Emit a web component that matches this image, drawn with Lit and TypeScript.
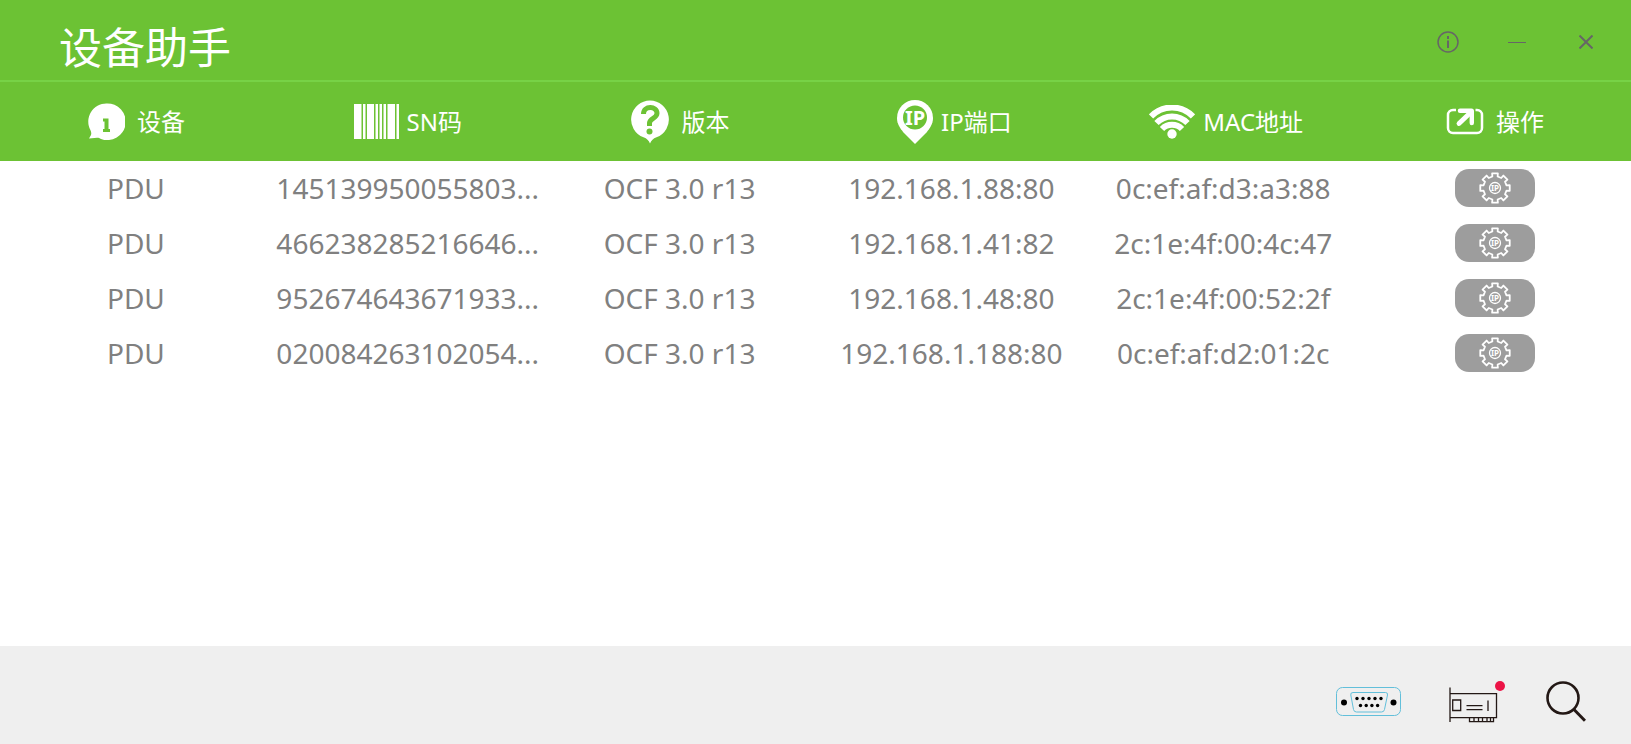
import { LitElement, html, css, svg } from "lit";
import { customElement, property, state } from "lit/decorators.js";

interface Device {
  name: string;
  sn: string;
  version: string;
  address: string;
  mac: string;
}

const DEVICES: Device[] = [
  { name: "PDU", sn: "145139950055803...", version: "OCF 3.0 r13", address: "192.168.1.88:80", mac: "0c:ef:af:d3:a3:88" },
  { name: "PDU", sn: "466238285216646...", version: "OCF 3.0 r13", address: "192.168.1.41:82", mac: "2c:1e:4f:00:4c:47" },
  { name: "PDU", sn: "952674643671933...", version: "OCF 3.0 r13", address: "192.168.1.48:80", mac: "2c:1e:4f:00:52:2f" },
  { name: "PDU", sn: "020084263102054...", version: "OCF 3.0 r13", address: "192.168.1.188:80", mac: "0c:ef:af:d2:01:2c" },
];

/* Outline of an eight-toothed gear centred on the origin. */
function gearPath(outer: number, inner: number): string {
  const points: string[] = [];
  const at = (r: number, deg: number) => {
    const a = (deg * Math.PI) / 180;
    points.push(`${(r * Math.cos(a)).toFixed(2)} ${(r * Math.sin(a)).toFixed(2)}`);
  };
  for (let i = 0; i < 8; i++) {
    const c = i * 45;
    at(inner, c - 13);
    at(outer, c - 11);
    at(outer, c + 11);
    at(inner, c + 13);
  }
  return `M${points.join("L")}Z`;
}

const GEAR = gearPath(15, 11.8);

const deviceIcon = html`<svg width="38" height="38" viewBox="0 0 38 38" aria-hidden="true">
  <path fill="#fff" d="M19.500 0.5a18.300 18.300 0 1 1-5.500 35.400c-1.500-.8-2.500-1.300-4-1.200L2 35.500l2-3.500c.5-1.500.3-3-.6-5A18 18 0 0 1 19.500 .5z" />
  <path fill="#6cc234" d="M16 15.500h5.500v10.500h1.500v3h-7v-3h1.500v-7.500h-1.500z" />
</svg>`;

const barcodeIcon = html`<svg width="45" height="36" viewBox="0 0 45 36" shape-rendering="crispEdges" aria-hidden="true">
  <path fill="#fff" d="M0 0h45v35H0z" />
  <path fill="#b5e096" d="M7 0h1v35H7zM11 0h1v35h-1zM21 0h1v35h-1zM25 0h1v35h-1zM29 0h1v35h-1zM33 0h1v35h-1zM42 0h1v35h-1z" />
  <path fill="#6cc234" d="M8 0h1v35H8zM12 0h1v35h-1zM20 0h1v35h-1zM24 0h1v35h-1zM28 0h1v35h-1zM32 0h1v35h-1zM41 0h1v35h-1z" />
</svg>`;

const versionIcon = html`<svg width="40" height="44" viewBox="0 0 40 44" aria-hidden="true">
  <path fill="#fff" d="M20 .5a19 19 0 0 1 6.500 36.800c-3.500 1.400-5 3-6.500 6.200-1.500-3.200-3-4.800-6.500-6.200A19 19 0 0 1 20 .5z" />
  <path fill="none" stroke="#6cc234" stroke-width="5" d="M13.500 14c0-8.500 13.500-8.500 13.500-.8 0 5.300-7.500 4.800-7.500 9.800v3" />
  <circle cx="19.500" cy="31.500" r="3" fill="#6cc234" />
</svg>`;

const pinIcon = html`<svg width="36" height="44" viewBox="0 0 36 44" aria-hidden="true">
  <path fill="#fff" d="M18 0a18 18 0 0 1 18 18c0 6-3 10-6.500 14.500L18 44 6.500 32.500C3 28 0 24 0 18A18 18 0 0 1 18 0z" />
  <circle cx="18" cy="17.500" r="12" fill="#6cc234" />
  <text x="18" y="25" text-anchor="middle" font-size="20" font-weight="700" fill="#fff">IP</text>
</svg>`;

const wifiIcon = html`<svg width="46" height="34" viewBox="0 0 46 34" aria-hidden="true">
  <g fill="none" stroke="#fff" stroke-width="6">
    <path d="M2 11.500a29 29 0 0 1 42 0" />
    <path d="M7.500 18a21.500 21.500 0 0 1 31 0" />
    <path d="M13 24a14 14 0 0 1 20 0" />
  </g>
  <circle cx="23" cy="29" r="4.700" fill="#fff" />
</svg>`;

const actionIcon = html`<svg width="38" height="27" viewBox="0 0 38 27" fill="none" stroke="#fff" aria-hidden="true">
  <path stroke-width="2.500" d="M10 2H7a5 5 0 0 0-5 5v13a5 5 0 0 0 5 5h24a5 5 0 0 0 5-5V7a5 5 0 0 0-5-5h-1.500" />
  <path stroke-width="4.800" stroke-linecap="round" d="M13 15.500 24 5" />
  <path fill="#fff" stroke="none" d="M14 .5h11.500a2.500 2.500 0 0 1 2.500 2.500v12a2.200 2.200 0 0 1-4.400 0V5H14a2.200 2.200 0 0 1 0-4.500z" />
</svg>`;

const COLUMNS = [
  { label: "设备", icon: deviceIcon, gap: "wide" },
  { label: "SN码", icon: barcodeIcon, gap: "narrow" },
  { label: "版本", icon: versionIcon, gap: "wide" },
  { label: "IP端口", icon: pinIcon, gap: "narrow inset" },
  { label: "MAC地址", icon: wifiIcon, gap: "narrow inset" },
  { label: "操作", icon: actionIcon, gap: "wide" },
];

const base = css`
  * {
    box-sizing: border-box;
  }
  button {
    display: flex;
    align-items: center;
    justify-content: center;
    margin: 0;
    padding: 0;
    border: 0;
    background: none;
    font: inherit;
    cursor: pointer;
  }
  svg {
    display: block;
    flex: none;
  }
`;

@customElement("title-bar")
class TitleBar extends LitElement {
  static styles = [
    base,
    css`
      :host {
        display: block;
      }
      .bar {
        display: flex;
        align-items: center;
        justify-content: space-between;
        height: 82px;
        padding: 4px 28px 0 59px;
        border-bottom: 2px solid #77d246;
        background: #6cc234;
      }
      .title {
        margin: 0;
        padding-top: 12px;
        color: #fff;
        font-size: 43px;
        font-weight: 400;
        line-height: 56px;
      }
      .controls {
        display: flex;
        gap: 35px;
      }
      .control {
        width: 34px;
        height: 34px;
      }
    `,
  ];

  render() {
    return html`<header class="bar">
      <h1 class="title">设备助手</h1>
      <div class="controls">
        <button class="control" aria-label="关于">
          <svg width="22" height="22" viewBox="0 0 22 22" fill="none" stroke="#666" stroke-width="1.500">
            <circle cx="11" cy="11" r="10" />
            <path stroke-width="2" d="M11 5v3M11 9.500v7.500" />
          </svg>
        </button>
        <button class="control" aria-label="最小化">
          <svg width="18" height="2" viewBox="0 0 18 2"><path fill="#666" d="M0 1h18v1H0z" /></svg>
        </button>
        <button class="control" aria-label="关闭">
          <svg width="14" height="14" viewBox="0 0 14 14" stroke="#666" stroke-width="2"><path d="M.5.5l13 13M13.500.5l-13 13" /></svg>
        </button>
      </div>
    </header>`;
  }
}

@customElement("device-table")
class DeviceTable extends LitElement {
  static styles = [
    base,
    css`
      :host {
        display: block;
      }
      .table {
        width: 100%;
        table-layout: fixed;
        border-collapse: collapse;
      }
      .head {
        height: 79px;
        padding: 0;
        background: #6cc234;
        color: #fff;
        font-size: 24px;
        font-weight: 400;
        line-height: 32px;
      }
      .label {
        display: flex;
        align-items: center;
        justify-content: center;
      }
      .wide {
        gap: 12px;
      }
      .narrow {
        gap: 8px;
      }
      .inset {
        padding-left: 6px;
      }
      .cell {
        height: 55px;
        padding: 0 0 2px;
        color: #808080;
        font-size: 28px;
        line-height: 38px;
        text-align: center;
        white-space: nowrap;
      }
      .settings {
        width: 80px;
        height: 38px;
        margin: 0 auto;
        border-radius: 14px;
        background: #9d9d9d;
      }
    `,
  ];

  @property({ attribute: false }) devices: Device[] = [];

  render() {
    return html`<table class="table">
      <thead>
        <tr>
          ${COLUMNS.map(
            (c) => html`<th class="head" scope="col"><span class="label ${c.gap}">${c.icon}<span>${c.label}</span></span></th>`
          )}
        </tr>
      </thead>
      <tbody>
        ${this.devices.map(
          (d) => html`<tr>
            <td class="cell">${d.name}</td>
            <td class="cell">${d.sn}</td>
            <td class="cell">${d.version}</td>
            <td class="cell">${d.address}</td>
            <td class="cell">${d.mac}</td>
            <td class="cell">
              <button class="settings" aria-label="设置 ${d.address}">
                <svg width="34" height="34" viewBox="-17 -17 34 34" aria-hidden="true">
                  <path d=${GEAR} fill="none" stroke="#fff" stroke-width="1.800" stroke-linejoin="round" />
                  <circle r="5.500" fill="none" stroke="#fff" stroke-width="1.300" />
                  <text y="3" text-anchor="middle" font-size="8" font-weight="700" fill="#fff">IP</text>
                </svg>
              </button>
            </td>
          </tr>`
        )}
      </tbody>
    </table>`;
  }
}

@customElement("tool-bar")
class ToolBar extends LitElement {
  static styles = [
    base,
    css`
      :host {
        display: block;
      }
      .bar {
        display: flex;
        justify-content: flex-end;
        gap: 47px;
        padding: 35px 45px 21px;
        background: #efefef;
      }
      .tool {
        position: relative;
        height: 42px;
      }
      .dot {
        position: absolute;
        top: 0;
        right: -6px;
        width: 10px;
        height: 10px;
        border-radius: 50%;
        background: #ec1346;
      }
    `,
  ];

  render() {
    const pins = [
      ...[0, 1, 2, 3, 4].map((i) => svg`<circle cx=${21 + i * 6} cy="11.500" r="1.700" />`),
      ...[0, 1, 2, 3].map((i) => svg`<circle cx=${24.5 + i * 5.7} cy="18.500" r="1.700" />`),
    ];
    return html`<footer class="bar">
      <button class="tool" aria-label="串口">
        <svg width="66" height="30" viewBox="0 0 66 30">
          <g fill="none" stroke="#62bfda">
            <rect x=".5" y=".5" width="64" height="28" rx="6" />
            <path d="M17 5.500h32.500q2.500 0 2 2.500l-3 14.500q-.5 2.500-3 2.500h-25q-2.500 0-3-2.500L14.800 8q-.5-2.500 2.200-2.500z" />
          </g>
          <circle cx="8" cy="15.500" r="3" />
          <circle cx="57.500" cy="15.500" r="3" />
          ${pins}
        </svg>
      </button>
      <button class="tool" aria-label="网卡">
        <svg width="50" height="42" viewBox="0 0 50 42" fill="none" stroke="#231815">
          <path stroke-width="1.300" d="M1 6.500v34.500M1 12.600h46.500v24H1M20.500 36.600v4h24v-4M25 37v3.500M29.500 37v3.500M33.500 37v3.500M38 37v3.500M41.500 37v3.500" />
          <path stroke-width="1.300" d="M3.700 19h8v10.500h-8zM17.500 24.600h16M17.500 28.700h16M39 19.500v10.500" />
        </svg>
        <span class="dot"></span>
      </button>
      <button class="tool" aria-label="搜索">
        <svg width="40" height="42" viewBox="0 0 40 42" fill="none" stroke="#231815">
          <circle cx="17" cy="17" r="15.500" stroke-width="2.600" />
          <path stroke-width="3" d="M27.500 28 39 39.800" />
        </svg>
      </button>
    </footer>`;
  }
}

@customElement("app-root")
class AppRoot extends LitElement {
  static styles = css`
    :host {
      display: flex;
      flex-direction: column;
      min-height: 100vh;
      background: #fff;
      font-family: "Noto Sans", "Noto Sans CJK SC", sans-serif;
    }
    .content {
      flex: 1;
    }
  `;

  @state() private devices = DEVICES;

  render() {
    return html`
      <title-bar></title-bar>
      <main class="content"><device-table .devices=${this.devices}></device-table></main>
      <tool-bar></tool-bar>
    `;
  }
}
